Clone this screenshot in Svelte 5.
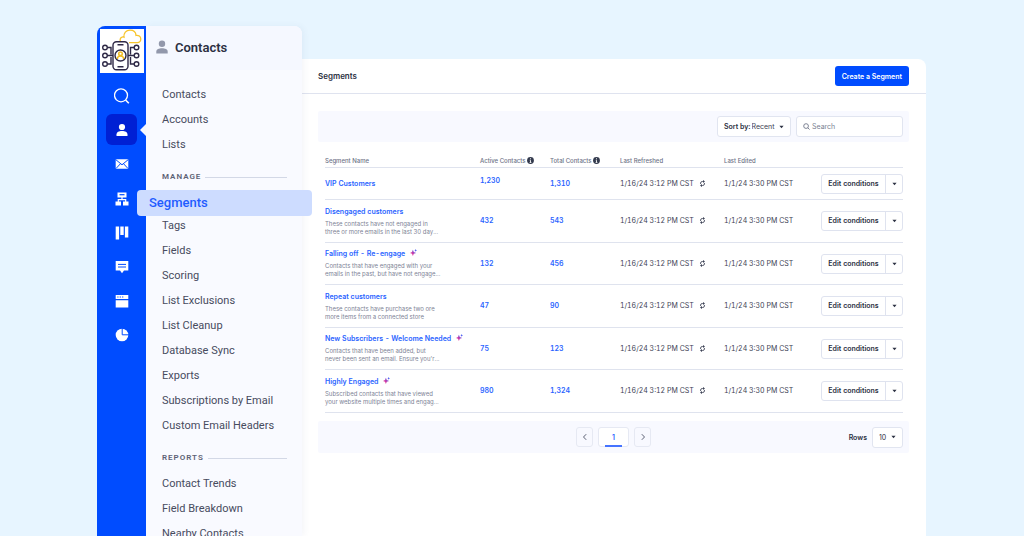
<script lang="ts">
	type Segment = {
		name: string;
		text?: string[];
		ai?: boolean;
		active: string;
		total: string;
	};

	const topLinks = ['Contacts', 'Accounts', 'Lists'];
	const manageLinks = [
		'Segments',
		'Tags',
		'Fields',
		'Scoring',
		'List Exclusions',
		'List Cleanup',
		'Database Sync',
		'Exports',
		'Subscriptions by Email',
		'Custom Email Headers'
	];
	const reportLinks = ['Contact Trends', 'Field Breakdown', 'Nearby Contacts'];

	const segments: Segment[] = [
		{ name: 'VIP Customers', active: '1,230', total: '1,310' },
		{
			name: 'Disengaged customers',
			text: ['These contacts have not engaged in', 'three or more emails in the last 30 day...'],
			active: '432',
			total: '543'
		},
		{
			name: 'Falling off - Re-engage',
			text: ['Contacts that have engaged with your', 'emails in the past, but have not engage...'],
			ai: true,
			active: '132',
			total: '456'
		},
		{
			name: 'Repeat customers',
			text: ['These contacts have purchase two ore', 'more items from a connected store'],
			active: '47',
			total: '90'
		},
		{
			name: 'New Subscribers - Welcome Needed',
			text: ['Contacts that have been added, but', "never been sent an email. Ensure you'r..."],
			ai: true,
			active: '75',
			total: '123'
		},
		{
			name: 'Highly Engaged',
			text: ['Subscribed contacts that have viewed', 'your website multiple times and engag...'],
			ai: true,
			active: '980',
			total: '1,324'
		}
	];

	let current = $state('Segments');
	let sort = $state('Recent');
	let rows = $state('10');
	let query = $state('');
</script>

{#snippet caret()}
	<svg class="caret" viewBox="0 0 6 4" aria-hidden="true"><path d="M.5.5h5L3 3.500z" /></svg>
{/snippet}

{#snippet info()}
	<svg class="info" viewBox="0 0 8 8" aria-hidden="true">
		<circle cx="4" cy="4" r="3.900" fill="#333a4d" />
		<path d="M4 1.400v1.200M3.200 3.700H4v2.400M3 6.200h2" fill="none" stroke="#fff" stroke-width="1" />
	</svg>
{/snippet}

{#snippet linkList(links: string[])}
	<ul>
		{#each links as link}
			<li class:current={link === current}>
				<a href="#{link}" onclick={() => (current = link)}>{link}</a>
			</li>
		{/each}
	</ul>
{/snippet}

<div class="page">
	<nav class="rail" aria-label="Main">
		<svg class="logo" viewBox="0 0 44 44" aria-hidden="true">
			<rect width="44" height="44" fill="#fff" />
			<path
				d="M20.500 12.500A3 3 0 0 1 22 8.200c.6-.3 1.300-.3 2 0-.5-4 2-7 6-7 3.300 0 5.800 2 6 5.200 2.500-.4 4.800 1 4.800 3.500 0 2.200-1.300 3.700-3.500 3.700H29"
				fill="none"
				stroke="#f7c52d"
				stroke-width="1.300"
			/>
			<g fill="none" stroke="#2e2946" stroke-width="1.400">
				<rect x="13" y="12.700" width="15" height="28" rx="3.500" fill="#fff" />
				<path d="M17.500 15.800h6M17.500 37.700h6M7.500 18.500H11v7M7.500 26.500H13M7.500 35H11v-7M34 18.500h-3.500v7M34 26.500h-6M34 35h-3.500v-7" />
				<circle cx="5" cy="18.500" r="2.300" />
				<circle cx="5" cy="26.500" r="2.300" />
				<circle cx="5" cy="35" r="2.300" />
				<circle cx="36.500" cy="18.500" r="2.300" />
				<circle cx="36.500" cy="26.500" r="2.300" />
				<circle cx="36.500" cy="35" r="2.300" />
				<circle cx="20.500" cy="26.500" r="5.500" fill="#fff" />
			</g>
			<g fill="none" stroke="#f2bd22" stroke-width="1.500">
				<circle cx="20.500" cy="24.800" r="1.800" />
				<path d="M17.300 30c.2-4 6.200-4 6.400 0" />
			</g>
		</svg>

		<div class="rail-group">
			<button aria-label="Search">
				<svg viewBox="0 0 16 16">
					<circle cx="7" cy="7.300" r="6.500" fill="none" stroke="#fff" stroke-width="1.300" />
					<path d="M11.600 12l3.200 3.200" stroke="#fff" stroke-width="1.600" />
				</svg>
			</button>
			<button class="active" aria-label="Contacts">
				<svg viewBox="0 0 16 16">
					<circle cx="8" cy="5" r="3.100" />
					<path d="M2.500 14v-1.500C2.500 10 5 9 8 9s5.500 1 5.500 3.500V14z" />
				</svg>
			</button>
			<button aria-label="Campaigns">
				<svg viewBox="0 0 16 16">
					<rect x="1.700" y="3.200" width="12.600" height="9.600" rx=".8" />
					<path d="M2 3.800l6 5 6-5M2 12.500l4.500-4.800M14 12.500L9.500 7.700" fill="none" stroke="#004cff" stroke-width="1" />
				</svg>
			</button>
		</div>
		<div class="rail-group">
			<button aria-label="Automations">
				<svg viewBox="0 0 16 16">
					<path d="M3.500 1.500h9v5h-9zM1.500 10.500h5.500v4H1.500zM9 10.500h5.500v4H9z" />
					<path d="M8 6v2.700M4.300 11V8.700h7.400V11" fill="none" stroke="#fff" stroke-width="1.200" />
					<path d="M5.500 3.700h5" stroke="#004cff" stroke-width="1.200" />
				</svg>
			</button>
			<button aria-label="Deals">
				<svg viewBox="0 0 16 16">
					<path d="M1.700 1.500h3.400v13H1.700zM6.300 1.500h3.400v8.500H6.300zM10.900 1.500h3.400v11h-3.400z" />
				</svg>
			</button>
			<button aria-label="Conversations">
				<svg viewBox="0 0 16 16">
					<path d="M1.700 2h12.600v9.500H10L8 14.200 6 11.500H1.700z" />
					<path d="M4 5.400h8M4 8h8" stroke="#004cff" stroke-width="1" />
				</svg>
			</button>
			<button aria-label="Website">
				<svg viewBox="0 0 16 16">
					<path d="M1.700 2h12.600v4H1.700zM1.700 7.200h12.600v7.300H1.700z" />
					<path d="M3.300 4h1.200M5.700 4h1.200M8.100 4h1.200" stroke="#004cff" stroke-width="1.200" />
				</svg>
			</button>
			<button aria-label="Reports">
				<svg viewBox="0 0 16 16">
					<circle cx="8" cy="8" r="6.300" />
					<path d="M8.200 1v6.800H15" fill="none" stroke="#004cff" stroke-width="1" />
				</svg>
			</button>
		</div>
	</nav>

	<aside class="panel">
		<h1>
			<svg viewBox="0 0 12 14" aria-hidden="true">
				<circle cx="6" cy="3.700" r="3.200" />
				<path d="M.3 13.500v-1.800C.3 9 3 8.200 6 8.200s5.700.8 5.700 3.500v1.800z" />
			</svg>
			Contacts
		</h1>
		<nav aria-label="Contacts">
			{@render linkList(topLinks)}
			<h2>Manage</h2>
			{@render linkList(manageLinks)}
			<h2>Reports</h2>
			{@render linkList(reportLinks)}
		</nav>
	</aside>

	<main>
		<header>
			<h3>Segments</h3>
			<button class="primary">Create a Segment</button>
		</header>

		<div class="content">
			<div class="toolbar">
				<label class="field sort">
					<b>Sort by:</b>
					<select bind:value={sort}>
						<option>Recent</option>
						<option>Name</option>
					</select>
					{@render caret()}
				</label>
				<label class="field search">
					<svg viewBox="0 0 8 8" aria-hidden="true">
						<circle cx="3.500" cy="3.500" r="2.700" />
						<path d="M5.500 5.500l2 2" />
					</svg>
					<input type="search" placeholder="Search" aria-label="Search" bind:value={query} />
				</label>
			</div>

			<table>
				<colgroup>
					<col class="c-name" />
					<col class="c-count" />
					<col class="c-count" />
					<col class="c-date" />
					<col />
					<col class="c-actions" />
				</colgroup>
				<thead>
					<tr>
						<th>Segment Name</th>
						<th>Active Contacts {@render info()}</th>
						<th>Total Contacts {@render info()}</th>
						<th>Last Refreshed</th>
						<th>Last Edited</th>
						<th aria-label="Actions"></th>
					</tr>
				</thead>
				<tbody>
					{#each segments as segment}
						<tr class:short={!segment.text}>
							<td>
								<a class="name" href="#segment">{segment.name}</a>
								{#if segment.ai}
									<svg class="spark" viewBox="0 0 8 8" aria-hidden="true">
										<defs>
											<linearGradient id="spark" x1="0" y1="1" x2="1" y2="0">
												<stop offset=".3" stop-color="#e0359a" />
												<stop offset=".8" stop-color="#3d55f5" />
											</linearGradient>
										</defs>
										<path fill="url(#spark)" d="M3.300.8l1 2.700 2.700 1-2.700 1-1 2.500-1-2.500L0 4.500l2.300-1zM6.500 0l.5 1L8 1.500 7 2l-.5 1L6 2l-1-.5L6 1z" />
									</svg>
								{/if}
								{#if segment.text}
									<p>{segment.text[0]}<br />{segment.text[1]}</p>
								{/if}
							</td>
							<td class="active-count"><a href="#active">{segment.active}</a></td>
							<td><a href="#total">{segment.total}</a></td>
							<td>
								1/16/24 3:12 PM CST
								<svg class="refresh" viewBox="0 0 8 8" aria-hidden="true">
									<path class="arc" d="M1.800 4.600V3.500Q1.800 1.700 4 1.700h.8M6.200 3.400v1.100Q6.200 6.300 4 6.300h-.8" />
									<path d="M4.600 0l2.200 1.700-2.200 1.700zM3.400 8L1.200 6.300l2.200-1.700z" />
								</svg>
							</td>
							<td>1/1/24 3:30 PM CST</td>
							<td>
								<div class="split">
									<button>Edit conditions</button>
									<button class="more" aria-label="More actions">{@render caret()}</button>
								</div>
							</td>
						</tr>
					{/each}
				</tbody>
			</table>

			<div class="pager">
				<div class="pages">
					<button aria-label="Previous page"><svg viewBox="0 0 8 8"><path d="M5.200 1.200L2.500 4l2.700 2.800" /></svg></button>
					<button class="number">1</button>
					<button aria-label="Next page"><svg viewBox="0 0 8 8"><path d="M2.800 1.200L5.500 4 2.800 6.800" /></svg></button>
				</div>
				<div class="rows">
					<label for="rows">Rows</label>
					<div class="field">
						<select id="rows" bind:value={rows}>
							<option>10</option>
							<option>25</option>
						</select>
						{@render caret()}
					</div>
				</div>
			</div>
		</div>
	</main>
</div>

<style>
	:global(body) {
		margin: 0;
		background: #e7f5ff;
	}

	.page,
	.page * {
		box-sizing: border-box;
	}

	.page {
		display: flex;
		height: 100vh;
		padding: 26px 98px 0 97px;
		overflow: hidden;
		font-family: Roboto, 'Liberation Sans', sans-serif;
		color: #3b4054;
	}

	button,
	input,
	select {
		font: inherit;
		color: inherit;
		margin: 0;
		padding: 0;
		border: 0;
		background: none;
	}

	button {
		cursor: pointer;
	}

	a {
		text-decoration: none;
	}

	h1,
	h2,
	h3,
	p,
	ul {
		margin: 0;
		padding: 0;
	}

	/* Icon rail */
	.rail {
		flex: none;
		width: 49px;
		padding-top: 3px;
		display: flex;
		flex-direction: column;
		align-items: center;
		gap: 4px;
		background: #004cff;
		border-radius: 8px 0 0 0;
	}

	.logo {
		width: 44px;
		height: 44px;
		margin-bottom: 3px;
	}

	.rail-group {
		display: flex;
		flex-direction: column;
		gap: 3px;
	}

	.rail button {
		position: relative;
		display: grid;
		place-items: center;
		width: 31px;
		height: 31px;
		border-radius: 6px;
	}

	.rail button svg {
		width: 16px;
		height: 16px;
		fill: #fff;
	}

	.rail .active {
		background: #0020d4;
	}

	.rail .active::after {
		content: '';
		position: absolute;
		right: -9px;
		top: 10px;
		width: 6px;
		height: 12px;
		background: #f9faff;
		clip-path: polygon(0 50%, 100% 0, 100% 100%);
	}

	/* Contacts side panel */
	.panel {
		flex: none;
		position: relative;
		z-index: 1;
		width: 156px;
		background: #f9faff;
		border-radius: 0 8px 0 0;
		box-shadow: 2px 0 6px rgba(60, 80, 140, 0.06);
	}

	h1 {
		display: flex;
		align-items: center;
		gap: 7px;
		height: 44px;
		padding: 0 0 2px 10px;
		background: #f5f8ff;
		border-radius: 0 8px 0 0;
		font-size: 13px;
		font-weight: 600;
		color: #2b3042;
	}

	h1 svg {
		width: 12px;
		height: 14px;
		fill: #9298ab;
	}

	.panel nav {
		padding: 12px 15px 0 16px;
	}

	.panel ul {
		list-style: none;
	}

	.panel li a {
		display: block;
		font-size: 11px;
		line-height: 25px;
		white-space: nowrap;
		color: #474b5e;
	}

	.panel .current {
		margin: 0 -25px -3px;
	}

	.panel .current a {
		padding-left: 12px;
		border-radius: 4px;
		background: #cddcff;
		font-size: 13px;
		line-height: 26px;
		font-weight: 500;
		color: #1f5bff;
	}

	h2 {
		display: flex;
		align-items: center;
		gap: 4px;
		margin: 12px 0 5px;
		font-size: 8px;
		line-height: 16px;
		font-weight: 600;
		letter-spacing: 1px;
		text-transform: uppercase;
		color: #5d6275;
	}

	h2::after {
		content: '';
		flex: 1;
		height: 1px;
		background: #d3d8e6;
	}

	/* Segments page */
	main {
		flex: 1;
		min-width: 0;
		margin-top: 33px;
		background: #fff;
		border-radius: 0 8px 0 0;
		font-family: Inter, 'Liberation Sans', sans-serif;
		font-size: 7px;
	}

	header {
		display: flex;
		align-items: center;
		justify-content: space-between;
		height: 35px;
		padding: 0 17px 0 16px;
		border-bottom: 1px solid #dfe3ef;
	}

	h3 {
		font-size: 8px;
		font-weight: 600;
		color: #2b3042;
	}

	.primary {
		height: 20px;
		padding: 0 7px;
		border-radius: 3px;
		background: #004cff;
		color: #fff;
		font-weight: 600;
	}

	.content {
		padding: 17px 17px 0 16px;
	}

	.toolbar {
		display: flex;
		justify-content: flex-end;
		gap: 5px;
		padding: 5px 6px;
		border-radius: 2px;
		background: #f8f9ff;
	}

	.field {
		display: flex;
		align-items: center;
		height: 21px;
		padding: 0 6px;
		border: 1px solid #e1e5f0;
		border-radius: 3px;
		background: #fff;
	}

	.field select {
		flex: 1;
		min-width: 0;
		appearance: none;
		outline: none;
	}

	.caret {
		flex: none;
		width: 5px;
		height: 4px;
		fill: #2b3042;
	}

	.sort {
		gap: 1px;
		width: 74px;
	}

	.sort b {
		font-weight: 600;
		white-space: nowrap;
		color: #2b3042;
	}

	.search {
		gap: 2px;
		width: 107px;
	}

	.search svg {
		flex: none;
		width: 7px;
		height: 7px;
		fill: none;
		stroke: #6d7286;
	}

	.search input {
		flex: 1;
		min-width: 0;
		outline: none;
		appearance: none;
	}

	.search input::placeholder {
		color: #7a7f92;
	}

	/* Table */
	table {
		width: calc(100% - 13px);
		margin: 9px 6px 8px 7px;
		border-collapse: separate;
		border-spacing: 0;
		table-layout: fixed;
		font-variant-numeric: tabular-nums;
	}

	.c-name {
		width: 155px;
	}

	.c-count {
		width: 70px;
	}

	.c-date {
		width: 104px;
	}

	.c-actions {
		width: 82px;
	}

	th,
	td {
		padding: 0;
		border-bottom: 1px solid #dfe3ee;
		text-align: left;
		vertical-align: middle;
		white-space: nowrap;
	}

	th {
		height: 17px;
		padding-top: 2px;
		font-size: 6px;
		font-weight: 500;
		color: #6d7286;
	}

	td {
		height: 43px;
		line-height: 10px;
	}

	tr:nth-child(odd) td {
		height: 42px;
	}

	tr.short td {
		height: 32px;
	}

	td a {
		font-weight: 600;
		color: #2a63ff;
	}

	.short .active-count {
		padding-bottom: 6px;
	}

	td p {
		margin-top: 3px;
		font-size: 6px;
		line-height: 8px;
		color: #7e8396;
	}

	.info {
		width: 7px;
		height: 7px;
		vertical-align: -1px;
	}

	.spark {
		width: 7px;
		height: 7px;
		margin-left: 3px;
	}

	.refresh {
		width: 7px;
		height: 7px;
		margin-left: 3px;
		vertical-align: -1px;
		fill: #3b4054;
	}

	.refresh .arc {
		fill: none;
		stroke: #3b4054;
	}

	.split {
		display: flex;
		height: 20px;
		border: 1px solid #dfe3ef;
		border-radius: 3px;
	}

	.split button {
		flex: 1;
		font-weight: 600;
		color: #2b3042;
	}

	.split .more {
		flex: none;
		display: grid;
		place-items: center;
		width: 17px;
		border-left: 1px solid #dfe3ef;
	}

	/* Pager */
	.pager {
		display: grid;
		grid-template-columns: 1fr auto 1fr;
		align-items: center;
		height: 32px;
		padding: 0 6px;
		border-radius: 2px;
		background: #f8f9ff;
	}

	.pages {
		grid-column: 2;
		display: flex;
		gap: 5px;
	}

	.pages button {
		display: grid;
		place-items: center;
		width: 17px;
		height: 20px;
		border: 1px solid #e6e9f3;
		border-radius: 3px;
	}

	.pages svg {
		width: 8px;
		height: 8px;
		fill: none;
		stroke: #5d6275;
	}

	.pages .number {
		position: relative;
		width: 31px;
		background: #fff;
		font-weight: 600;
		color: #2a63ff;
	}

	.number::after {
		content: '';
		position: absolute;
		left: 6px;
		right: 6px;
		bottom: -1px;
		height: 2px;
		background: #4573ff;
	}

	.rows {
		display: flex;
		align-items: center;
		justify-content: flex-end;
		gap: 5px;
		color: #2b3042;
		font-weight: 600;
	}

	.rows .field {
		width: 31px;
		font-weight: 400;
	}
</style>
